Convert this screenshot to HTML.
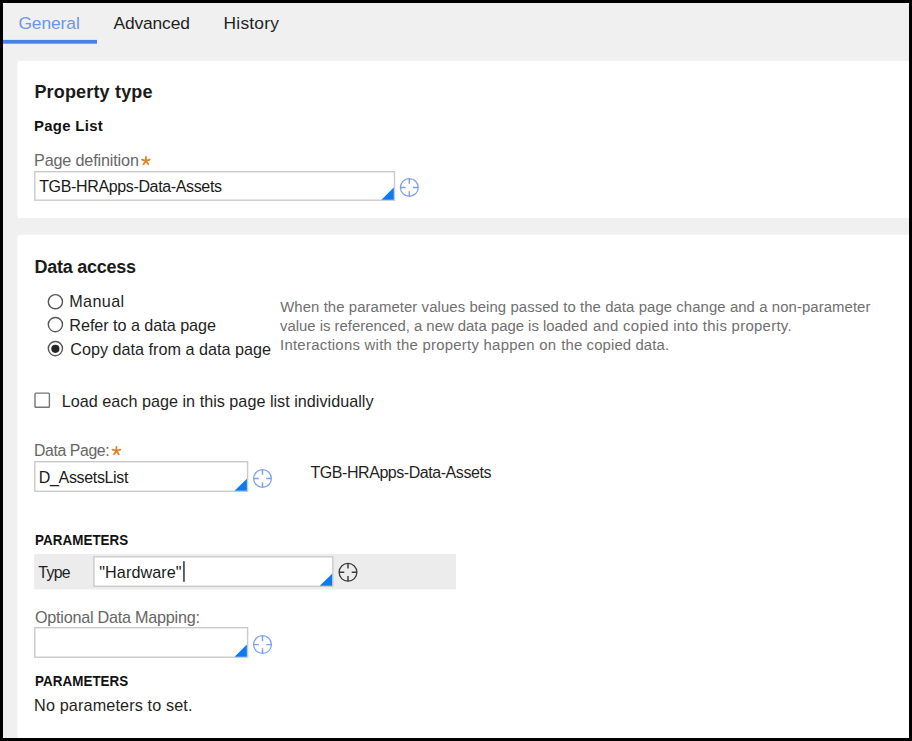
<!DOCTYPE html>
<html>
<head>
<meta charset="utf-8">
<title>Property</title>
<style>
html,body{margin:0;padding:0;}
body{width:912px;height:741px;overflow:hidden;background:#000;position:relative;font-family:"Liberation Sans",sans-serif;}
#shapes{position:absolute;left:0;top:0;display:block;}
.t{position:absolute;white-space:nowrap;line-height:20px;}
</style>
</head>
<body>
<svg id="shapes" width="912" height="741" viewBox="0 0 912 741">
<rect x="0" y="0" width="912" height="741" fill="#000"/>
<rect x="3" y="3" width="906" height="735" fill="#f0f0f0"/>
<rect x="3" y="39.9" width="94" height="3.8" fill="#4682e0"/>
<rect x="17.4" y="60.9" width="900" height="157.1" rx="2.6" fill="#fff"/>
<rect x="17.4" y="234.8" width="900" height="520" rx="2.6" fill="#fff"/>
<rect x="909" y="0" width="3" height="741" fill="#000"/>
<rect x="0" y="738" width="912" height="3" fill="#000"/>
<rect x="34.2" y="553.9" width="421.8" height="35.5" fill="#ececec"/>
<rect x="34.8" y="171.7" width="359.70" height="28.50" fill="#fff" stroke="#cacaca" stroke-width="1.4"/>
<path d="M393.80 187.60V199.70H381.50Z" fill="#0a7af5"/>
<rect x="34.8" y="461.7" width="212.80" height="29.60" fill="#fff" stroke="#cacaca" stroke-width="1.4"/>
<path d="M246.90 478.70V490.80H234.60Z" fill="#0a7af5"/>
<rect x="93.9" y="556.8" width="238.90" height="29.50" fill="#fff" stroke="#cacaca" stroke-width="1.4"/>
<path d="M332.10 573.70V585.80H319.80Z" fill="#0a7af5"/>
<rect x="34.8" y="627.7" width="212.80" height="29.50" fill="#fff" stroke="#cacaca" stroke-width="1.4"/>
<path d="M246.90 644.60V656.70H234.60Z" fill="#0a7af5"/>
<g fill="none" stroke="#7aa2ec" stroke-width="1.25"><circle cx="409.3" cy="187.5" r="8.9"/><path stroke-width="1.45" d="M409.3 178.6v5.2M409.3 196.4v-5.2M400.4 187.5h5.2M418.2 187.5h-5.2"/></g>
<g fill="none" stroke="#7aa2ec" stroke-width="1.25"><circle cx="262.5" cy="478.5" r="8.9"/><path stroke-width="1.45" d="M262.5 469.6v5.2M262.5 487.4v-5.2M253.6 478.5h5.2M271.4 478.5h-5.2"/></g>
<g fill="none" stroke="#3a3a3a" stroke-width="1.25"><circle cx="348.0" cy="572.3" r="8.9"/><path stroke-width="1.45" d="M348.0 563.4v5.2M348.0 581.2v-5.2M339.1 572.3h5.2M356.9 572.3h-5.2"/></g>
<g fill="none" stroke="#7aa2ec" stroke-width="1.25"><circle cx="262.5" cy="644.6" r="8.9"/><path stroke-width="1.45" d="M262.5 635.7v5.2M262.5 653.5v-5.2M253.6 644.6h5.2M271.4 644.6h-5.2"/></g>
<circle cx="55.4" cy="301.7" r="7.1" fill="#fff" stroke="#555" stroke-width="1.4"/>
<circle cx="55.4" cy="324.6" r="7.1" fill="#fff" stroke="#555" stroke-width="1.4"/>
<circle cx="55.4" cy="348.6" r="7.1" fill="#fff" stroke="#555" stroke-width="1.4"/>
<circle cx="55.4" cy="348.8" r="4.1" fill="#262626"/>
<rect x="35" y="393.1" width="14.4" height="14.2" rx="0.8" fill="#fff" stroke="#767676" stroke-width="1.4"/>
<path transform="translate(145.9 160.9)" d="M0 0L0 -4.0M0 0L3.9 -1.27M0 0L2.41 3.32M0 0L-2.41 3.32M0 0L-3.9 -1.27" stroke="#dc8526" stroke-width="1.75" stroke-linecap="round" fill="none"/>
<path transform="translate(116.4 450.9)" d="M0 0L0 -4.0M0 0L3.9 -1.27M0 0L2.41 3.32M0 0L-2.41 3.32M0 0L-3.9 -1.27" stroke="#dc8526" stroke-width="1.75" stroke-linecap="round" fill="none"/>
<rect x="183.3" y="561.2" width="1.3" height="20.6" fill="#111"/>
</svg>
<span class="t" style="left:18.4px;top:13px;font-size:17.4px;letter-spacing:-0.084px;color:#6a96ea;">General</span>
<span class="t" style="left:113.5px;top:13px;font-size:17.4px;letter-spacing:-0.14px;color:#1f1f1f;">Advanced</span>
<span class="t" style="left:223.6px;top:13px;font-size:17.4px;letter-spacing:0.198px;color:#1f1f1f;">History</span>
<span class="t" style="left:34.4px;top:82px;font-size:18.0px;letter-spacing:0.173px;color:#1a1a1a;font-weight:700;">Property type</span>
<span class="t" style="left:33.9px;top:116px;font-size:14.9px;letter-spacing:0.332px;color:#111;font-weight:700;">Page List</span>
<span class="t" style="left:34.0px;top:150px;font-size:16.2px;letter-spacing:-0.157px;color:#666;">Page definition</span>
<span class="t" style="left:39.2px;top:177px;font-size:16.0px;letter-spacing:-0.356px;color:#1a1a1a;">TGB-HRApps-Data-Assets</span>
<span class="t" style="left:34.4px;top:257px;font-size:18.0px;letter-spacing:-0.247px;color:#1a1a1a;font-weight:700;">Data access</span>
<span class="t" style="left:69.2px;top:291px;font-size:16.2px;letter-spacing:0.381px;color:#1f1f1f;">Manual</span>
<span class="t" style="left:69.3px;top:315px;font-size:16.2px;letter-spacing:-0.047px;color:#1f1f1f;">Refer to a data page</span>
<span class="t" style="left:70.3px;top:339px;font-size:16.2px;letter-spacing:0.001px;color:#1f1f1f;">Copy data from a data page</span>
<span class="t" style="left:280.2px;top:297px;font-size:14.9px;letter-spacing:0.082px;color:#707070;">When the parameter values being passed to the data page change and a non-parameter</span>
<span class="t" style="left:280.0px;top:316px;font-size:14.9px;letter-spacing:-0.006px;color:#707070;">value is referenced, a new data page is loaded</span>
<span class="t" style="left:592.9px;top:316px;font-size:14.9px;letter-spacing:0.298px;color:#707070;">and copied into this property.</span>
<span class="t" style="left:280.0px;top:335px;font-size:14.9px;letter-spacing:0.266px;color:#707070;">Interactions with the property happen on</span>
<span class="t" style="left:561.3px;top:335px;font-size:14.9px;letter-spacing:0.118px;color:#707070;">the copied data.</span>
<span class="t" style="left:61.8px;top:391px;font-size:16.2px;letter-spacing:0.007px;color:#1f1f1f;">Load each page in this page list individually</span>
<span class="t" style="left:34.0px;top:441px;font-size:15.8px;letter-spacing:-0.383px;color:#666;">Data Page:</span>
<span class="t" style="left:38.8px;top:468px;font-size:16.0px;letter-spacing:-0.338px;color:#1a1a1a;">D_AssetsList</span>
<span class="t" style="left:310.5px;top:463px;font-size:16.0px;letter-spacing:-0.446px;color:#1f1f1f;">TGB-HRApps-Data-Assets</span>
<span class="t" style="left:35.1px;top:531px;font-size:13.4px;letter-spacing:0.043px;color:#111;font-weight:700;transform:scaleY(1.12);transform-origin:0 14px;">PARAMETERS</span>
<span class="t" style="left:38.3px;top:563px;font-size:15.8px;letter-spacing:-0.654px;color:#1f1f1f;">Type</span>
<span class="t" style="left:99.3px;top:562px;font-size:16.2px;letter-spacing:0.065px;color:#1a1a1a;">"Hardware"</span>
<span class="t" style="left:35.0px;top:607px;font-size:16.2px;letter-spacing:-0.242px;color:#666;">Optional Data Mapping:</span>
<span class="t" style="left:35.1px;top:672px;font-size:13.4px;letter-spacing:0.043px;color:#111;font-weight:700;transform:scaleY(1.12);transform-origin:0 14px;">PARAMETERS</span>
<span class="t" style="left:34.1px;top:695px;font-size:16.2px;letter-spacing:0.138px;color:#1f1f1f;">No parameters to set.</span>
</body>
</html>
